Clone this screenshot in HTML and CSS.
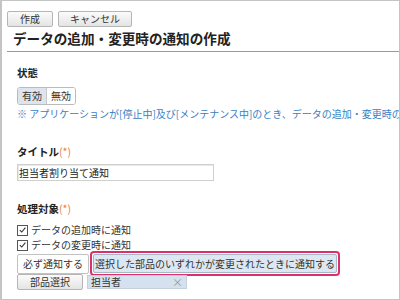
FILE: index.html
```html
<!DOCTYPE html>
<html>
<head>
    <meta charset="UTF-8">
    <title>通知の作成</title>
    <link rel="stylesheet" href="styles.css">
</head>
<body>
    <div class="frame">
        <div class="toolbar">
            <button class="btn">作成</button>
            <button class="btn">キャンセル</button>
        </div>
        <h2 class="page-title">データの追加・変更時の通知の作成</h2>
        <div class="content">
            <div class="label label-state">状態</div>
            <div class="toggle">
                <span class="toggle-item active">有効</span>
                <span class="toggle-item">無効</span>
            </div>
            <div class="note">※ アプリケーションが[停止中]及び[メンテナンス中]のとき、データの追加・変更時の</div>

            <div class="label label-title">タイトル<span class="req">(*)</span></div>
            <div class="text-input">担当者割り当て通知</div>

            <div class="label label-target">処理対象<span class="req">(*)</span></div>
            <div class="check-row check-first">
                <span class="checkbox"><svg width="10" height="10" viewBox="0 0 10 10"><path d="M2 5.2 L4.2 7.3 L8.2 2.4" fill="none" stroke="#333" stroke-width="1.2"/></svg></span>
                データの追加時に通知
            </div>
            <div class="check-row">
                <span class="checkbox"><svg width="10" height="10" viewBox="0 0 10 10"><path d="M2 5.2 L4.2 7.3 L8.2 2.4" fill="none" stroke="#333" stroke-width="1.2"/></svg></span>
                データの変更時に通知
            </div>
            <div class="mode-row">
                <span class="mode-btn">必ず通知する</span>
                <span class="highlight"><span class="mode-btn selected">選択した部品のいずれかが変更されたときに通知する</span></span>
            </div>
            <div class="field-row">
                <button class="btn btn-pick">部品選択</button>
                <span class="tag">担当者<span class="tag-x">×</span></span>
            </div>
        </div>
    </div>
</body>
</html>
```

FILE: styles.css
```css
body {
    margin: 0;
    font-family: "Noto Sans CJK JP", "Noto Sans", sans-serif;
    font-size: 10px;
    color: #333;
    background: #fff;
}
.frame {
    width: 400px;
    height: 300px;
    box-sizing: border-box;
    border: 1px solid #c4c4c4;
    border-left-width: 2px;
    padding: 10px 0 0 5px;
    overflow: hidden;
}
.toolbar {
    display: flex;
    gap: 5px;
}
.btn {
    height: 16px;
    padding: 0 11px;
    border: 1px solid #b5b5b5;
    border-radius: 2px;
    background: linear-gradient(#fbfbfb, #e4e4e4);
    font-family: inherit;
    font-size: 10px;
    line-height: 14px;
    color: #333;
}
.toolbar .btn:first-child {
    padding: 0 12px;
}
.page-title {
    margin: 2px 0 0 0;
    padding: 0 0 3px 6px;
    font-size: 13.6px;
    line-height: 19px;
    font-weight: bold;
    color: #222;
    border-bottom: 1px solid #999;
}
.content {
    padding-left: 10px;
}
.label {
    font-weight: bold;
    font-size: 10.5px;
    line-height: 14px;
    color: #222;
}
.label-state {
    margin-top: 14px;
}
.req {
    color: #f07a3a;
    font-weight: normal;
}
.toggle {
    display: inline-flex;
    margin-top: 7px;
    border: 1px solid #bbb;
    border-radius: 3px;
    overflow: hidden;
}
.toggle-item {
    padding: 0 4px;
    line-height: 16px;
    background: #fff;
}
.toggle-item.active {
    background: #dce5ee;
    border-right: 1px solid #c8c8c8;
}
.note {
    margin-top: 2px;
    line-height: 14px;
    color: #3a80c4;
    white-space: nowrap;
}
.label-title {
    margin-top: 24px;
}
.text-input {
    margin-top: 5px;
    width: 193px;
    height: 13px;
    padding: 1px 1px;
    border: 1px solid #d0d0d0;
    box-shadow: inset 1px 1px 0 #e8e8e8;
    line-height: 13px;
    color: #222;
}
.label-target {
    margin-top: 21px;
}
.check-row {
    display: flex;
    align-items: center;
    gap: 3px;
    line-height: 14px;
    margin-top: 1px;
}
.check-row.check-first {
    margin-top: 7px;
}
.checkbox {
    width: 9px;
    height: 9px;
    border: 1px solid #555;
    display: flex;
    align-items: center;
    justify-content: center;
    background: #fff;
}
.mode-row {
    display: flex;
    align-items: center;
    gap: 1px;
    margin-top: -1px;
}
.mode-btn {
    display: inline-block;
    height: 20px;
    box-sizing: border-box;
    padding: 0 5px;
    border: 1px solid #c2c2c2;
    border-radius: 2px;
    line-height: 18px;
    background: #fff;
}
.mode-btn.selected {
    height: 19px;
    line-height: 17px;
    background: #dde7f1;
    border-color: #a9b6c3;
    padding: 0 1px 0 1px;
}
.highlight {
    display: inline-flex;
    padding: 1px 1px;
    border: 2px solid #d8316c;
    border-radius: 4px;
}
.field-row {
    display: flex;
    align-items: center;
    gap: 4px;
    margin-top: -2px;
}
.btn-pick {
    padding: 0 12px;
    height: 16px;
}
.tag {
    display: inline-flex;
    align-items: center;
    justify-content: space-between;
    width: 100px;
    height: 14px;
    box-sizing: border-box;
    padding: 0 3px 0 3px;
    background: #d5e1ee;
    border: 1px solid #c3d1df;
    line-height: 12px;
    color: #333;
}
.tag-x {
    color: #999;
    font-size: 11px;
}
```
